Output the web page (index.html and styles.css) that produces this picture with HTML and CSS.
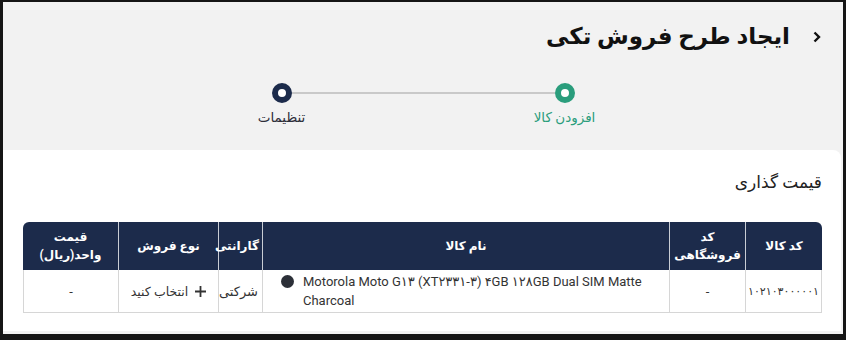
FILE: index.html
```html
<!DOCTYPE html>
<html lang="fa" dir="rtl">
<head>
  <meta charset="UTF-8" />
  <title>ایجاد طرح فروش تکی</title>
  <link rel="stylesheet" href="styles.css">
</head>
<body>
  <div class="frame">

    <div class="header">
      <div class="title-row">
        <div class="back-button">
          <svg width="10" height="12" viewBox="0 0 10 12"><path d="M2.5 1.5 L7 6 L2.5 10.5" fill="none" stroke="#111" stroke-width="2.4"/></svg>
        </div>
        <h2>ایجاد طرح فروش تکی</h2>
      </div>

      <div class="stepper">
        <div class="step step-done">
          <div class="step-dot"></div>
          <div class="step-label">افزودن کالا</div>
        </div>
        <div class="step-line"></div>
        <div class="step step-next">
          <div class="step-dot"></div>
          <div class="step-label">تنظیمات</div>
        </div>
      </div>
    </div>

    <div class="card">
      <div class="card-title">قیمت گذاری</div>

      <table class="price-table">
        <thead>
          <tr>
            <th class="col-code">کد کالا</th>
            <th class="col-shop">کد فروشگاهی</th>
            <th class="col-name">نام کالا</th>
            <th class="col-warranty">گارانتی</th>
            <th class="col-type">نوع فروش</th>
            <th class="col-price">قیمت واحد(ریال)</th>
          </tr>
        </thead>
        <tbody>
          <tr>
            <td class="code-cell">۱۰۲۱۰۳۰۰۰۰۰۱</td>
            <td>-</td>
            <td class="name-cell">
              <div class="product" dir="ltr">
                <span class="swatch"></span>
                <span class="product-name">Motorola Moto G۱۳ (XT۲۳۳۱-۳) ۴GB ۱۲۸GB Dual SIM Matte Charcoal</span>
              </div>
            </td>
            <td>شرکتی</td>
            <td>
              <div class="pick">
                <svg width="11" height="11" viewBox="0 0 11 11"><path d="M5.5 0 V11 M0 5.5 H11" stroke="#333" stroke-width="1.8"/></svg>
                <span>انتخاب کنید</span>
              </div>
            </td>
            <td>-</td>
          </tr>
        </tbody>
      </table>
    </div>

  </div>
</body>
</html>
```

FILE: styles.css
```css
body {
  margin: 0;
  font-family: Roboto, "DejaVu Sans", sans-serif;
  background-color: #ffffff;
}

.frame {
  width: 846px;
  height: 340px;
  box-sizing: border-box;
  border-style: solid;
  border-color: #151515;
  border-width: 2px 3px 6px 3px;
  background-color: #f2f2f2;
  display: flex;
  flex-direction: column;
  overflow: hidden;
}

.header {
  height: 148px;
  box-sizing: border-box;
  padding: 14px 21px 0 21px;
}

.title-row {
  display: flex;
  align-items: center;
  gap: 22px;
  height: 40px;
}

.back-button {
  display: flex;
  align-items: center;
  padding-top: 2px;
}

.title-row h2 {
  margin: 0;
  font-size: 23px;
  font-weight: bold;
  color: #111;
}

.stepper {
  display: flex;
  justify-content: center;
  margin-top: 27px;
}

.step {
  width: 110px;
  display: flex;
  flex-direction: column;
  align-items: center;
  position: relative;
  z-index: 1;
}

.step-dot {
  width: 8px;
  height: 8px;
  border-radius: 50%;
  border: 6px solid #2a9d7c;
  background-color: white;
}

.step-next .step-dot {
  border-color: #1c2b4b;
}

.step-label {
  margin-top: 6px;
  font-size: 13.5px;
  color: #2a9d7c;
}

.step-next .step-label {
  color: #2e2e3a;
}

.step-line {
  flex: 0 0 263px;
  height: 2px;
  background-color: #c9c9c9;
  margin: 9px -45px 0;
}

.card {
  flex: 1;
  background-color: white;
  border-top-right-radius: 8px;
  margin-right: 2px;
  margin-bottom: 3px;
  padding: 22px 19px 0 20px;
}

.card-title {
  font-size: 17px;
  color: #222;
  height: 36px;
}

.price-table {
  width: 799px;
  margin-top: 14px;
  border-collapse: separate;
  border-spacing: 0;
  table-layout: fixed;
  font-size: 13px;
  color: #333;
}

.price-table th {
  background-color: #1c2b4b;
  color: white;
  font-weight: bold;
  font-size: 12px;
  height: 48px;
  padding: 0 3px;
  box-sizing: border-box;
  line-height: 18px;
  border-left: 1px solid #c8ccd4;
}

.price-table th:first-child {
  border-top-right-radius: 6px;
}

.price-table th:last-child {
  border-top-left-radius: 6px;
  border-left: none;
}

.price-table td {
  height: 42px;
  padding: 0 4px;
  box-sizing: border-box;
  text-align: center;
  border-left: 1px solid #d6d6d6;
  border-bottom: 1px solid #d6d6d6;
}

.price-table td:first-child {
  border-right: 1px solid #d6d6d6;
}

.price-table td.code-cell {
  font-size: 11px;
  padding: 0 2px;
}

.col-code { width: 77px; }
.col-shop { width: 76px; }
.col-name { width: 407px; }
.col-warranty { width: 44px; }
.col-type { width: 100px; }
.col-price { width: 95px; }

.price-table td.name-cell {
  padding: 2px 22px 2px 18px;
}

.product {
  display: flex;
  align-items: flex-start;
  gap: 9px;
  text-align: left;
  line-height: 19px;
}

.swatch {
  flex: 0 0 13px;
  height: 13px;
  margin-top: 3px;
  border-radius: 50%;
  background-color: #2c3038;
}

.pick {
  display: flex;
  align-items: center;
  justify-content: center;
  gap: 7px;
}

.pick span {
  font-size: 12.5px;
}
```
